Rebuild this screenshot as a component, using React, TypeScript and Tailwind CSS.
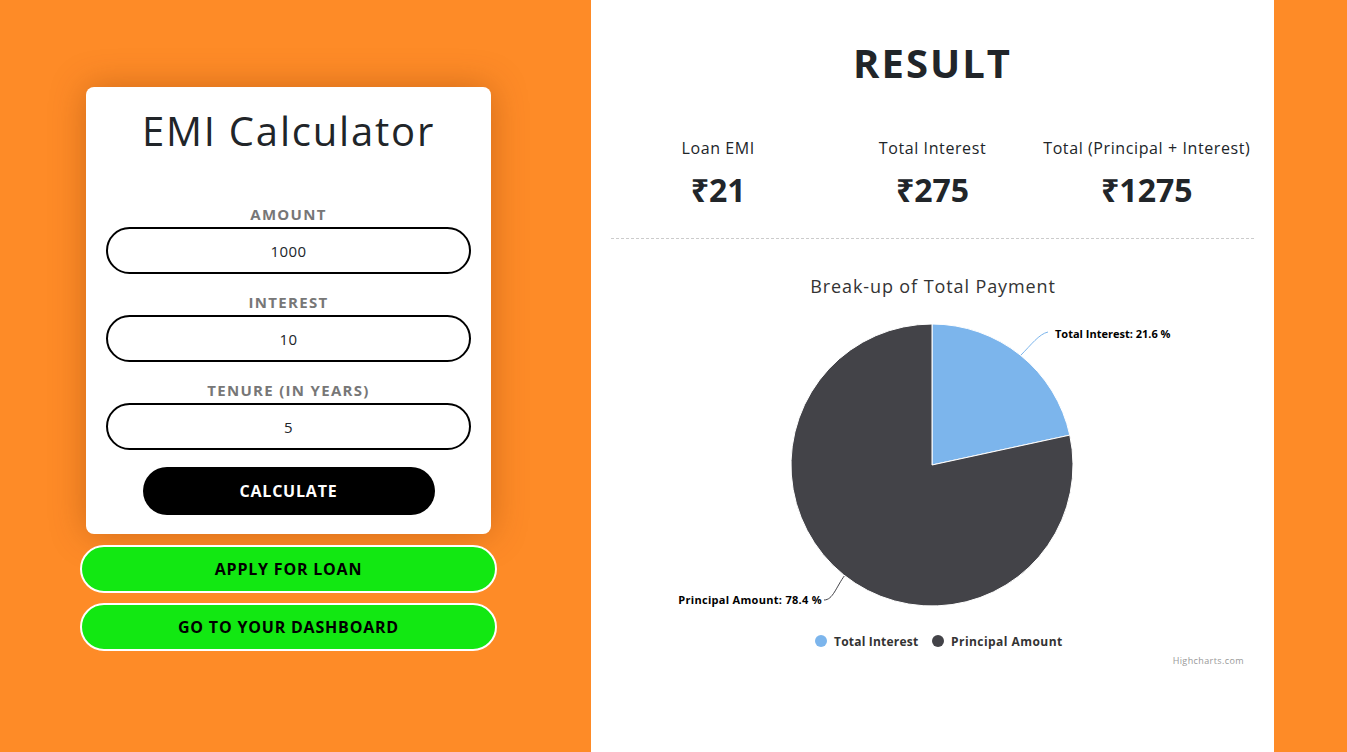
import React from "react";

const FONT = "font-['Open_Sans',_'Noto_Sans',_sans-serif]";

const FIELDS = [
  { label: "AMOUNT", value: "1000" },
  { label: "INTEREST", value: "10" },
  { label: "TENURE (IN YEARS)", value: "5" },
];

const RESULTS = [
  { label: "Loan EMI", value: "₹21" },
  { label: "Total Interest", value: "₹275" },
  { label: "Total (Principal + Interest)", value: "₹1275" },
];

function Calculator() {
  return (
    <div className="w-[405px] rounded-lg bg-white px-5 pt-5 pb-[19px] shadow-[0_0_35px_rgba(120,50,0,0.35)]">
      <h1 className="text-center text-[40px] leading-[48px] tracking-[1.8px] text-[#212529]">EMI Calculator</h1>
      <div className="mt-[50px] flex flex-col gap-[19px]">
        {FIELDS.map((f) => (
          <div key={f.label} className="flex flex-col items-center gap-1">
            <label className="text-[15px] leading-[18px] font-bold tracking-[1.3px] text-[#777]">{f.label}</label>
            <input
              readOnly
              value={f.value}
              className="h-[47px] w-full rounded-full border-2 border-black text-center text-[15px] tracking-[0.4px] text-[#212529] outline-none"
            />
          </div>
        ))}
      </div>
      <div className="mt-[17px] flex justify-center">
        <button className="h-12 w-[292px] rounded-full bg-black text-base font-bold tracking-[0.8px] text-white">
          CALCULATE
        </button>
      </div>
    </div>
  );
}

function PieChart() {
  const font = "'Open Sans', 'Noto Sans', sans-serif";
  return (
    <svg width="643" height="420" viewBox="0 0 643 420" style={{ fontFamily: font }}>
      <text x="322" y="38" textAnchor="middle" fontSize="18" letterSpacing="0.9" fill="#333">
        Break-up of Total Payment
      </text>
      <path d="M410,100 C420,90 428,79 437,77" fill="none" stroke="#7cb5ec" strokeWidth="1" />
      <path d="M234,320 C225,332 222,345 213,345" fill="none" stroke="#434348" strokeWidth="1" />
      <path
        d="M321,210 L321,69 A141,141 0 0 1 458.79,180.11 Z"
        fill="#7cb5ec"
        stroke="#fff"
        strokeWidth="1"
      />
      <path
        d="M321,210 L458.79,180.11 A141,141 0 1 1 321,69 Z"
        fill="#434348"
        stroke="#fff"
        strokeWidth="1"
      />
      <text x="444" y="83" fontSize="11" fontWeight="bold" fill="#000">
        Total Interest: 21.6 %
      </text>
      <text x="211" y="349" textAnchor="end" fontSize="11" fontWeight="bold" letterSpacing="0.3" fill="#000">
        Principal Amount: 78.4 %
      </text>
      <circle cx="210" cy="386" r="6" fill="#7cb5ec" />
      <text x="223" y="390.5" fontSize="12" fontWeight="bold" letterSpacing="0.2" fill="#333">
        Total Interest
      </text>
      <circle cx="327" cy="386" r="6" fill="#434348" />
      <text x="340" y="390.5" fontSize="12" fontWeight="bold" letterSpacing="0.45" fill="#333">
        Principal Amount
      </text>
      <text x="633" y="409" textAnchor="end" fontSize="9" letterSpacing="0.4" fill="#999">
        Highcharts.com
      </text>
    </svg>
  );
}

export default function App() {
  return (
    <div className={`flex h-[752px] w-full bg-[#fe8b27] ${FONT}`}>
      <div className="w-[591px] shrink-0 pt-[87px]">
        <div className="ml-[80px] flex w-[417px] flex-col items-center">
          <Calculator />
          <div className="mt-[11px] flex w-full flex-col gap-[10px]">
            <button className="h-12 w-full rounded-full border-2 border-white bg-[#12e812] text-base font-bold tracking-[0.8px] text-black">
              APPLY FOR LOAN
            </button>
            <button className="h-12 w-full rounded-full border-2 border-white bg-[#12e812] text-base font-bold tracking-[0.8px] text-black">
              GO TO YOUR DASHBOARD
            </button>
          </div>
        </div>
      </div>

      <div className="flex w-[683px] shrink-0 flex-col items-center bg-white px-5 pt-[39px]">
        <h2 className="text-[40px] leading-[48px] font-bold tracking-[2px] text-[#212529]">RESULT</h2>
        <div className="mt-[49px] grid w-full grid-cols-3">
          {RESULTS.map((r) => (
            <div key={r.label} className="flex flex-col items-center">
              <p className="text-base leading-6 tracking-[0.6px] text-[#212529]">{r.label}</p>
              <p className="mt-[10px] text-[32px] leading-10 font-bold text-[#212529]">{r.value}</p>
            </div>
          ))}
        </div>
        <div className="mt-[28px] w-full border-t border-dashed border-[#ccc]" />
        <div className="mt-4">
          <PieChart />
        </div>
      </div>
    </div>
  );
}
